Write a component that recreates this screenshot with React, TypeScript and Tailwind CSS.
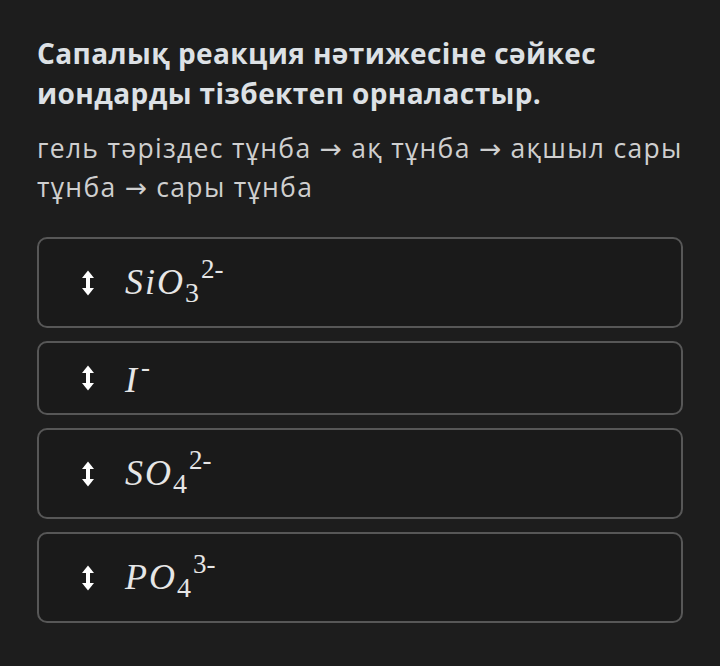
const ions = [
  { base: 'SiO', sub: '3', sup: '2-' },
  { base: 'I', sub: '', sup: '-' },
  { base: 'SO', sub: '4', sup: '2-' },
  { base: 'PO', sub: '4', sup: '3-' },
];

function DragIcon() {
  return (
    <svg width="12" height="26" viewBox="0 0 12 26" className="shrink-0">
      <rect x="4" y="6" width="4" height="14" fill="#ffffff" />
      <path d="M6 0.5 L12 8 L0 8 Z" fill="#ffffff" />
      <path d="M6 25.5 L12 18 L0 18 Z" fill="#ffffff" />
    </svg>
  );
}

function Arrow() {
  return <span style={{ fontFamily: '"DejaVu Sans", sans-serif' }}>→</span>;
}

export default function App() {
  return (
    <div className="min-h-[666px] w-[720px] bg-[#1d1d1d] px-[37px] pt-[33px]" style={{ fontFamily: '"Open Sans", "Noto Sans", sans-serif' }}>
      <h1 className="text-[28px] font-bold leading-[40px] tracking-[0.4px] text-[#dde1e5]">
        Сапалық реакция нәтижесіне сәйкес иондарды тізбектеп орналастыр.
      </h1>
      <p className="mt-[16px] text-[26.5px] leading-[38px] tracking-[1.3px] text-[#cfcfcf]">
        гель тәріздес тұнба <Arrow /> ақ тұнба <Arrow /> ақшыл сары тұнба <Arrow /> сары тұнба
      </p>

      <div className="mt-[30px] flex flex-col gap-[13px]">
        {ions.map((ion) => (
          <div
            key={ion.base + ion.sup}
            className="flex items-center rounded-[10px] border-2 border-[#575757] bg-[#1a1a1a] py-[14px] pl-[43px]"
          >
            <DragIcon />
            <div
              className={
                'ml-[31px] text-[36px] leading-[36px] text-[#e6e6e6] ' +
                (ion.sub ? 'pt-[11px] pb-[12px]' : 'pt-[5px] pb-[1px]')
              }
              style={{ fontFamily: '"Liberation Serif", "DejaVu Serif", serif' }}
            >
              <span className="italic tracking-[2px]">{ion.base}</span>
              {ion.sub && <span className="align-[-8px] text-[28px] leading-[0]">{ion.sub}</span>}
              <span className="ml-[2px] align-[16px] text-[27px] leading-[0]">{ion.sup}</span>
            </div>
          </div>
        ))}
      </div>
    </div>
  );
}
